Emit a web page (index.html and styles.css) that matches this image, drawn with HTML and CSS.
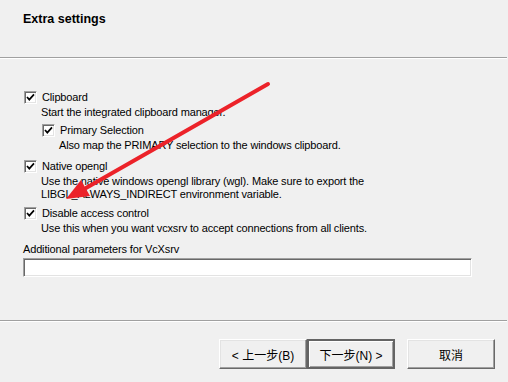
FILE: index.html
```html
<!DOCTYPE html>
<html lang="en">
<head>
  <meta charset="UTF-8">
  <meta name="viewport" content="width=device-width, initial-scale=1.0">
  <title>Extra settings</title>
  <link rel="stylesheet" href="styles.css">
</head>
<body>
  <div class="page">

    <div class="head">
      <div class="head-title">Extra settings</div>
    </div>

    <div class="content">
      <div class="check-row">
        <span class="box"><svg viewBox="0 0 11 11"><polyline points="2,5 4.3,7.6 9,2.4"/></svg></span>
        <span class="check-label">Clipboard</span>
      </div>
      <div class="desc">Start the integrated clipboard manager.</div>

      <div class="sub">
        <div class="check-row">
          <span class="box"><svg viewBox="0 0 11 11"><polyline points="2,5 4.3,7.6 9,2.4"/></svg></span>
          <span class="check-label">Primary Selection</span>
        </div>
        <div class="desc">Also map the PRIMARY selection to the windows clipboard.</div>
      </div>

      <div class="check-row gap-big">
        <span class="box"><svg viewBox="0 0 11 11"><polyline points="2,5 4.3,7.6 9,2.4"/></svg></span>
        <span class="check-label">Native opengl</span>
      </div>
      <div class="desc">Use the native windows opengl library (wgl). Make sure to export the<br>LIBGL_ALWAYS_INDIRECT environment variable.</div>

      <div class="check-row gap-mid">
        <span class="box"><svg viewBox="0 0 11 11"><polyline points="2,5 4.3,7.6 9,2.4"/></svg></span>
        <span class="check-label">Disable access control</span>
      </div>
      <div class="desc">Use this when you want vcxsrv to accept connections from all clients.</div>

      <div class="field-label">Additional parameters for VcXsrv</div>
      <div class="field"></div>
    </div>

    <div class="foot">
      <div class="btn">&lt; 上一步(B)</div>
      <div class="btn btn-default">下一步(N) &gt;</div>
      <div class="btn btn-cancel">取消</div>
    </div>

    <!-- red annotation arrow drawn over the dialog -->
    <svg class="arrow" viewBox="0 0 508 382">
      <line x1="268" y1="84" x2="86" y2="188"/>
      <polygon points="66,199 90,196 81,180"/>
    </svg>
  </div>
</body>
</html>
```

FILE: styles.css
```css
body {
  margin: 0;
  padding: 0;
  background: #f0f0f0;
  font-family: 'Liberation Sans', 'Noto Sans CJK SC', sans-serif;
  font-size: 11px;
  color: #000;
}

.page {
  position: relative;
  width: 508px;
  height: 382px;
  display: flex;
  flex-direction: column;
  overflow: hidden;
}

.head {
  height: 58px;
  border-bottom: 1px solid #a0a0a0;
  box-shadow: 0 1px 0 #fff;
  box-sizing: border-box;
  padding: 11px 0 0 23px;
  margin-right: 1px;
}

.head-title {
  font-weight: bold;
  font-size: 12.5px;
  line-height: 16px;
}

.content {
  flex: 1;
  padding: 31px 0 0 24px;
  letter-spacing: -0.15px;
}

.check-row {
  display: flex;
  align-items: center;
  height: 16px;
}

.gap-big {
  margin-top: 6px;
}

.gap-mid {
  margin-top: 4px;
}

.box {
  width: 11px;
  height: 11px;
  background: #fff;
  border: 1px solid;
  border-color: #a0a0a0 #fff #fff #a0a0a0;
  box-shadow: inset 1px 1px 0 #696969, inset -1px -1px 0 #e3e3e3;
  margin-right: 5px;
  display: flex;
}

.box svg {
  width: 11px;
  height: 11px;
}

.box polyline {
  fill: none;
  stroke: #000;
  stroke-width: 1.7;
}

.check-label {
  line-height: 16px;
}

.desc {
  padding-left: 17px;
  margin-top: 1px;
  line-height: 13px;
}

.sub {
  padding-left: 18px;
  margin-top: 3px;
}

.field-label {
  margin: 6px 0 0 -1px;
  line-height: 16px;
}

.field {
  margin: 1px 0 0 -1px;
  width: 449px;
  height: 19px;
  box-sizing: border-box;
  background: #fff;
  border: 1px solid;
  border-color: #a0a0a0 #fff #fff #a0a0a0;
  box-shadow: inset 1px 1px 0 #696969, inset -1px -1px 0 #e3e3e3;
}

.foot {
  height: 62px;
  box-sizing: border-box;
  border-top: 1px solid #a0a0a0;
  box-shadow: inset 0 1px 0 #fff;
  display: flex;
  justify-content: flex-end;
  align-items: flex-start;
  padding: 18px 12px 0 0;
  margin-right: 1px;
}

.btn {
  width: 88px;
  height: 30px;
  box-sizing: border-box;
  display: flex;
  align-items: center;
  justify-content: center;
  font-size: 12px;
  background: #f0f0f0;
  border: 1px solid;
  border-color: #fff #696969 #696969 #fff;
  box-shadow: inset -1px -1px 0 #a0a0a0, inset 1px 1px 0 #e3e3e3;
}

.btn-default {
  border: 2px solid #646464;
  box-shadow: inset 1px 1px 0 #fff, inset -1px -1px 0 #a0a0a0;
}

.btn-cancel {
  margin-left: 12px;
}

.arrow {
  position: absolute;
  left: 0;
  top: 0;
  width: 508px;
  height: 382px;
  pointer-events: none;
}

.arrow line {
  stroke: #ec2229;
  stroke-width: 4;
  stroke-linecap: round;
}

.arrow polygon {
  fill: #ec2229;
}
```
